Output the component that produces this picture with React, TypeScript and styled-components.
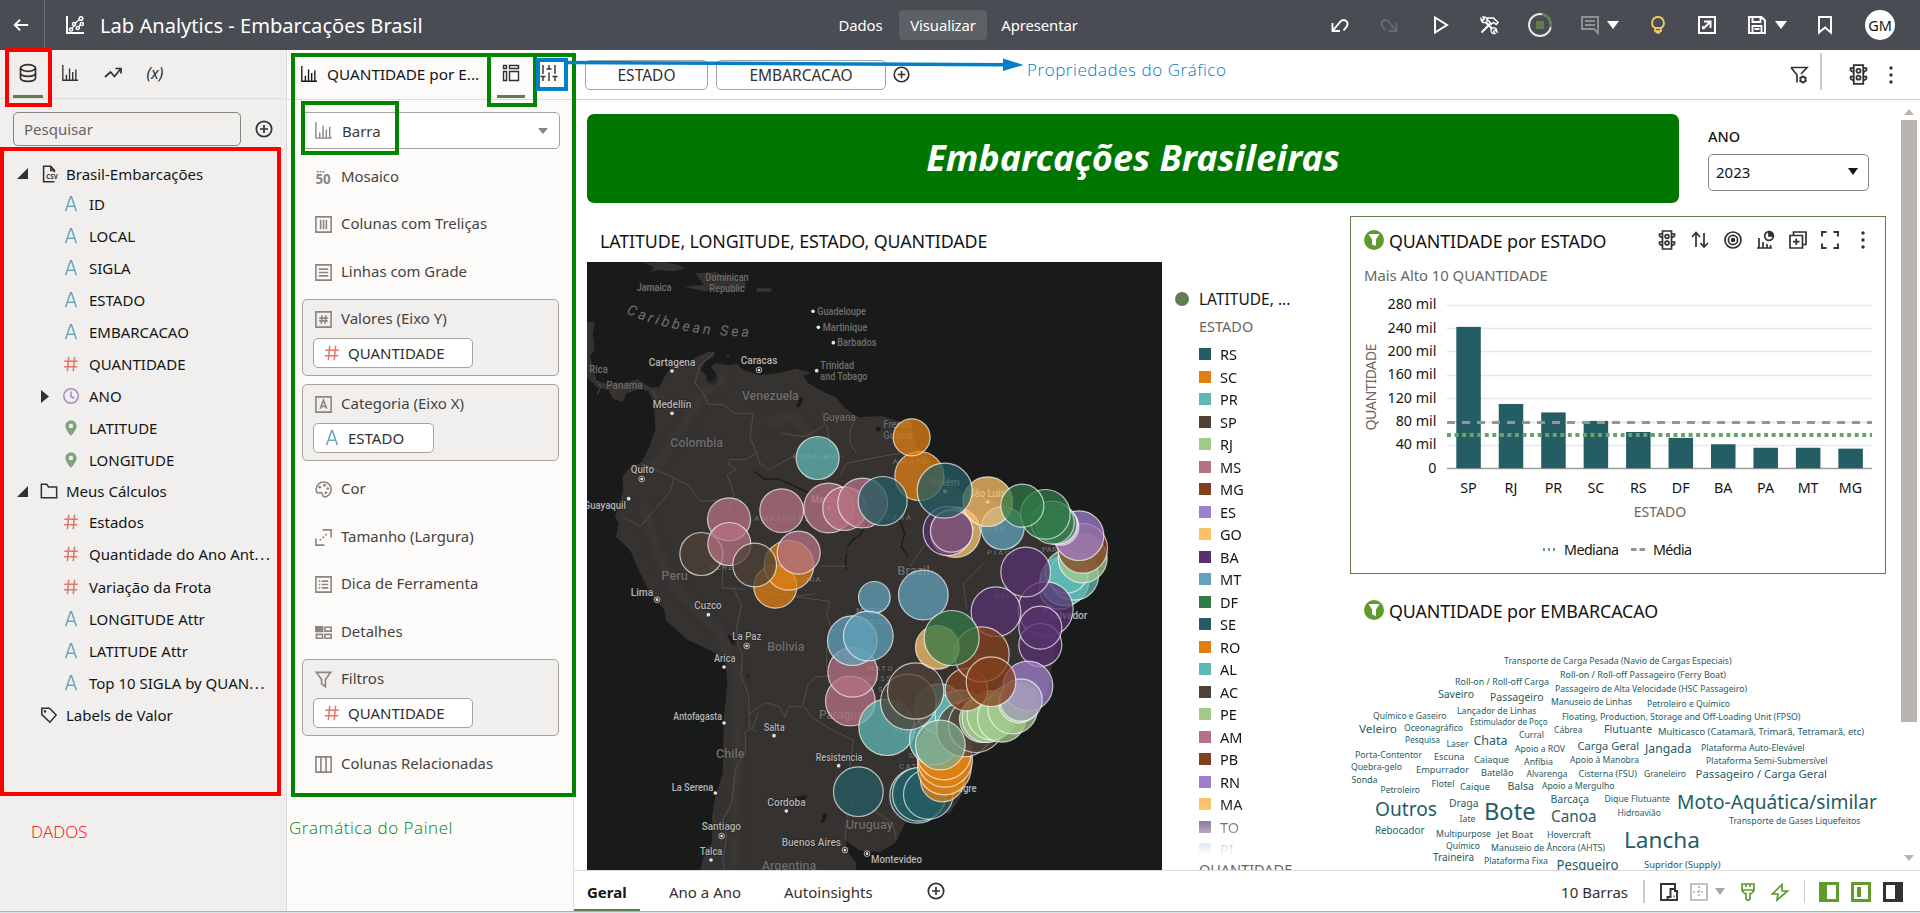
import React from 'react';
import styled, { createGlobalStyle } from 'styled-components';

const Global = createGlobalStyle`
  * { box-sizing: border-box; }
  body { margin: 0; background: #fff; overflow: hidden; }
  body, button, input { font-family: "Noto Sans", "Open Sans", sans-serif; }
  svg { display: block; flex: none; overflow: visible; }
`;

/* ---------- icons ---------- */

const shapes: Record<string, React.ReactNode> = {
  back: <path d="M18 10H3M9 4L3 10l6 6" strokeWidth="2" />,
  scatter: <><path d="M2 1v17h17" strokeWidth="2" /><path d="M6.800 13.600l3-3.600M9.800 8.500L14.500 4.500M15.500 9.500l-2 2.500" strokeWidth="1.300" /><g strokeWidth="1.500"><circle cx="6" cy="14.500" r="1.600" /><circle cx="9" cy="9" r="1.600" /><circle cx="12.700" cy="13" r="1.600" /><circle cx="16" cy="3.500" r="1.800" /><circle cx="16.800" cy="9" r="1.600" /></g></>,
  data: <><ellipse cx="10" cy="5" rx="7.500" ry="3.300" /><path d="M2.500 5v10c0 4.400 15 4.400 15 0V5M2.500 10c0 4.400 15 4.400 15 0" /></>,
  bars: <path d="M2 1v17h17M6 18v-6M9.500 18V5M13 18V9M16.500 18V6" strokeWidth="1.500" />,
  trend: <path d="M2 14l5.500-5 4 4.500L17.500 6M12.500 5.500h5.500v5" />,
  plus: <><circle cx="10" cy="10" r="7.700" /><path d="M10 6v8M6 10h8" /></>,
  grid: <path d="M2.500 2.500h3v3h-3zM8.500 2.500h9v3h-9zM2.500 8.500h3v9h-3zM8.500 8.500h9v9h-9z" strokeWidth="1.400" />,
  sliders: <path d="M4 2v8M4 13.500V18M1.500 13.500h5M10 2v4M10 9.500V18M7.500 6h5M16 2v8M16 13.500V18M13.500 13.500h5M4 10v1M16 10v1" strokeWidth="1.400" />,
  csv: <><path d="M16 8V6l-4-4.500H4v17h12M12 1.500V6h4" /><text x="7" y="15.500" fontSize="7" fontWeight="700" stroke="none" fill="currentColor">CSV</text></>,
  folder: <path d="M1.500 2.500h6l2 3h9v12h-17z" />,
  tag: <><path d="M2 2.500h8.500L18 10l-7 8-9-8.500z" /><circle cx="5.500" cy="6" r=".6" /></>,
  hash: <path d="M7.500 2L6 18M14 2l-1.500 16M2.500 7h15M2 13h15" />,
  attr: <path d="M4 18L9.500 2h1L16 18M6 12.500h8" />,
  clock: <><circle cx="10" cy="10" r="8" /><path d="M10 5v5.500l3.500 2" /></>,
  pin: <path fill="currentColor" stroke="none" fillRule="evenodd" d="M10 1.500a6.300 6.300 0 0 0-6.300 6.300C3.700 12 10 19 10 19s6.300-7 6.300-11.200A6.300 6.300 0 0 0 10 1.500zm0 3.800a2.400 2.400 0 1 1 0 4.900 2.400 2.400 0 0 1 0-4.900z" />,
  fifty: <><text x="1.500" y="17" fontSize="14" fontWeight="700" stroke="none" fill="currentColor">50</text><path d="M3 4h8" strokeDasharray="2 1" /></>,
  trellisCols: <path d="M2 2h16v16H2zM7 5v10M10 5v10M13 5v10" />,
  trellisRows: <path d="M2 2h16v16H2zM5 6.500h10M5 10h10M5 13.500h10" />,
  values: <><path d="M2 2h16v16H2z" /><path d="M8.500 5.500l-.8 9M12.500 5.500l-.8 9M5.500 8.500h9M5.500 11.500h9" /></>,
  category: <path d="M2 2h16v16H2zM6.500 14.500l3.500-9 3.500 9M7.500 12h5" />,
  palette: <><path d="M2.300 9.500a7.900 7.900 0 1 1 9 8.300c-3 .2-1.500-3-3.300-4.300-1.500-1-3 1-4.500 0-1-.8-1.300-2.500-1.200-4z" /><g fill="currentColor" stroke="none"><circle cx="6" cy="7.500" r="1.500" /><circle cx="11" cy="5.500" r="1.500" /><circle cx="14.500" cy="9" r="1.500" /><circle cx="12.500" cy="13.500" r="1.500" /></g></>,
  size: <><path d="M9 2h9v8M11 18H2v-7" /><path d="M6 13l8-7" strokeDasharray="1.800 2.200" /></>,
  tip: <path d="M2 2h16v16H2zM5 6.500h1.500M8 6.500h7M5 10h1.500M8 10h7M5 13.500h1.500M8 13.500h7" />,
  details: <><path d="M2 4h7v5H2z" fill="currentColor" /><path d="M11.500 4.500H18v4h-6.500zM2.500 12H9v4H2.500zM11.500 12H18v4h-6.500z" /></>,
  funnel: <path d="M2.500 2.500h15L12 10v7.500l-4-3V10z" />,
  related: <path d="M2 2h16v16H2zM7.300 2v16M12.700 2v16" />,
  undo: <path d="M2.500 8v8h7.500M3 15.500L10.500 6.500c3.500-3.500 8.500 0 6.500 4.500L13.500 15.500" strokeWidth="1.900" />,
  redo: <path d="M17.500 8v8H10M17 15.500L9.500 6.500C6 3 1 6.500 3 11L6.500 15.500" strokeWidth="1.900" />,
  play: <path d="M4 2.500v15L16 10z" strokeWidth="2" />,
  tools: <><path d="M2.500 17.500L12 8" strokeWidth="2" /><path d="M8.500 3h6l4.500 4.500-1.800 2-2.700-2L12.500 9 8.500 5z" strokeWidth="1.500" /><path d="M6.500 7L13.500 14" strokeWidth="2.200" /><path d="M2 3.500l2 2 1.500-1.500-1.500-2c3-.5 4.500 1.500 4 4-1 2.500-6 2.500-6-2.500zM18 17l-2-2-1.500 1.500 1.500 2c-3 .5-4.500-1.500-4-4 1-2.500 6-2.500 6 2.500z" strokeWidth="1.300" /></>,
  comment: <path d="M2 2h16v16l-4-4H2zM5 6h10M5 10h10" strokeWidth="2" />,
  bulb: <path d="M7 13C2 10 4 2 10 2s8 8 3 11v3l-3 2-3-2zM7 13h6M8 16h4" strokeWidth="1.900" />,
  exportIcon: <path d="M2 2h16v16H2zM6 14l7-7M7 6.500h6.500V13M6 11v3" strokeWidth="2" />,
  save: <path d="M2 2h12.500L18 5.500V18H2zM5.500 2v5h8V2M5.500 18v-7h9v7M7.500 14h5" strokeWidth="1.900" />,
  bookmark: <path d="M4 2h12v15.500l-6-5-6 5z" strokeWidth="2" />,
  filterGear: <><path d="M2 2.500h16L12 9M2 2.500L8 10v7.500" /><circle cx="14" cy="14.500" r="2.600" /><path d="M14 10.500v1.500M14 17v1.500M10.500 12.500l1.300.7M16.200 15.700l1.300.8M10.500 16.500l1.300-.8M16.200 13.200l1.300-.7" /></>,
  traffic: <><path d="M5.500 1h9v18h-9zM5.500 4H2.500v2l3 2M5.500 12h-3v2l3 2M14.500 4h3v2l-3 2M14.500 12h3v2l-3 2" /><circle cx="10" cy="6.500" r="1.900" /><circle cx="10" cy="13" r="1.900" /></>,
  dots: <g fill="currentColor" stroke="none"><circle cx="10" cy="3" r="1.700" /><circle cx="10" cy="10" r="1.700" /><circle cx="10" cy="17" r="1.700" /></g>,
  sort: <path d="M6 17V3M2 7l4-4.500L10 7M14 3v14M10.500 13l3.500 4 4-4" />,
  target: <><circle cx="10" cy="10" r="8" /><circle cx="10" cy="10" r="4.600" /><circle cx="10" cy="10" r="1.400" fill="currentColor" /></>,
  chartPie: <><path d="M2 18h15M4 18V8M8 18v-6M12 18v-4M15.500 18v-3" /><circle cx="14" cy="6" r="4.300" /><path d="M14 1.700V6h4.300A4.300 4.300 0 0 0 14 1.700z" fill="currentColor" /></>,
  copy: <path d="M2 5.500h12.500V18H2zM5.500 5V2H18v12.500h-3M8.300 8.500v6.500M5 11.700h6.500" />,
  expand: <path d="M2 6.500V2h4.500M13.500 2H18v4.500M18 13.500V18h-4.500M6.500 18H2v-4.500" strokeWidth="1.900" />,
  devices: <path d="M8 18H2V2h14v5M16 7h-4.500v8H8.500v3H18V9h-2V7M14.500 14.500h1" strokeWidth="1.900" />,
  borders: <><path d="M2 2h16v16H2z" /><path d="M10 4v12M4 10h12" strokeDasharray="2 2" /></>,
  brush: <path d="M4 2h12v6.500l-2.500 3H12V17l-2 1.500L8 17v-5.500H6.500L4 8.500zM4 8h12M8 2v3M12 2v3" />,
  bolt: <path d="M12 2.500L2.500 12h5.500l-1 6L17.500 9h-5.500z" />,
};

const Svg = styled.svg<{ $s: number; $c?: string }>`
  width: ${p => p.$s}px;
  height: ${p => p.$s}px;
  color: ${p => p.$c || 'inherit'};
  fill: none;
  stroke: currentColor;
  stroke-width: 1.7;
`;
const Icon = ({ n, s = 20, c }: { n: string; s?: number; c?: string }) => (
  <Svg viewBox="0 0 20 20" $s={s} $c={c}>{shapes[n]}</Svg>
);

const Caret = styled.i<{ $c: string; $w?: number }>`
  width: 0; height: 0; flex: none;
  border-left: ${p => p.$w || 5.5}px solid transparent;
  border-right: ${p => p.$w || 5.5}px solid transparent;
  border-top: ${p => (p.$w || 5.5) * 1.35}px solid ${p => p.$c};
`;

/* ---------- page frame ---------- */

const Page = styled.div`
  position: relative;
  width: 1920px; height: 913px;
  display: flex; flex-direction: column;
  overflow: hidden; color: #161513; font-size: 15px; white-space: nowrap;
`;
const Header = styled.header`
  height: 50px; background: #494c53; color: #fff;
  display: flex; align-items: center; flex: none;
`;
const BackBtn = styled.div`
  width: 45px; height: 50px; padding-left: 12px; border-right: 1px solid #6d7076;
  display: flex; align-items: center;
`;
const Title = styled.h1`
  margin: 0 0 0 15px; width: 726px; font-size: 20.100px; font-weight: 400;
`;
const Brand = styled.div`display: flex; align-items: center; padding-left: 20px;`;
const Nav = styled.nav`display: flex; gap: 3px; width: 500px; margin-left: -1px;`;
const NavItem = styled.a<{ $on?: boolean; $w: number }>`
  height: 30px; width: ${p => p.$w}px; line-height: 30px; text-align: center; border-radius: 4px;
  font-size: 14.900px; letter-spacing: -.1px;
  background: ${p => (p.$on ? '#5d6166' : 'transparent')};
`;
const Tools = styled.div`display: flex; align-items: center; margin-left: auto; padding-right: 25px;`;
const Tool = styled.span<{ $ml: number }>`display: flex; margin-left: ${p => p.$ml}px;`;
const Avatar = styled.span`
  width: 30px; height: 30px; border-radius: 50%; background: #fff; color: #161513;
  font-size: 14.500px; line-height: 31px; text-align: center;
`;
const Body = styled.div`display: flex; height: 861px;`;
const BottomEdge = styled.div`height: 2px; background: #d4e6ea; border-top: 1px solid #9fb6bb;`;

/* ---------- data panel ---------- */

const DataPanel = styled.aside`width: 286px; background: #f0efee; flex: none;`;
const PanelTabs = styled.div`
  height: 49px; border-bottom: 1px solid #dedbd8; display: flex; padding-left: 13px; color: #33302d;
`;
const PanelTab = styled.div<{ $w: number; $on?: boolean }>`
  width: ${p => p.$w}px; height: 48px;
  display: flex; align-items: center; justify-content: center;
  border-bottom: 3px solid ${p => (p.$on ? '#5f7d4f' : 'transparent')};
  font: italic 16px "Noto Sans";
`;
const SearchRow = styled.div`display: flex; align-items: center; margin: 13px 0 0 13px; gap: 13px; color: #33302d;`;
const Search = styled.div`
  width: 228px; height: 34px; border: 1px solid #8b8580; border-radius: 5px; padding: 0 10px;
  line-height: 33px; color: #69635d; font-size: 15px;
`;
const Tree = styled.div`padding-top: 13px;`;
const TreeRow = styled.div<{ $h: number; $lvl: number }>`
  height: ${p => p.$h}px; display: flex; align-items: center;
  padding-left: ${p => (p.$lvl ? 41 : 17)}px;
`;
const Twist = styled.span<{ $w: number }>`width: ${p => p.$w}px; display: flex;`;
const TreeIcon = styled.span<{ $lvl: number }>`width: ${p => (p.$lvl ? 27 : 26)}px; display: flex;`;
const Dots = styled.span`letter-spacing: 1.700px;`;

const fieldColor: Record<string, string> = { attr: '#6ba4bd', hash: '#e0786a', clock: '#a48fc0', pin: '#82a478' };

type Row = { kind: string; name: string; parent?: boolean; cut?: boolean };
const fields: Row[] = [
  { kind: 'attr', name: 'ID' }, { kind: 'attr', name: 'LOCAL' }, { kind: 'attr', name: 'SIGLA' },
  { kind: 'attr', name: 'ESTADO' }, { kind: 'attr', name: 'EMBARCACAO' }, { kind: 'hash', name: 'QUANTIDADE' },
  { kind: 'clock', name: 'ANO', parent: true }, { kind: 'pin', name: 'LATITUDE' }, { kind: 'pin', name: 'LONGITUDE' },
];
const calcs: Row[] = [
  { kind: 'hash', name: 'Estados' }, { kind: 'hash', name: 'Quantidade do Ano Ant', cut: true }, { kind: 'hash', name: 'Variação da Frota' },
  { kind: 'attr', name: 'LONGITUDE Attr' }, { kind: 'attr', name: 'LATITUDE Attr' }, { kind: 'attr', name: 'Top 10 SIGLA by QUAN', cut: true },
];

const Open = () => <svg width="11" height="11"><path d="M11 0v11H0z" fill="#33302d" /></svg>;
const Closed = () => <svg width="8" height="13"><path d="M0 0l8 6.500L0 13z" fill="#33302d" /></svg>;

const Folder = ({ icon, name, open = true, h }: { icon: string; name: string; open?: boolean; h: number }) => (
  <TreeRow $h={h} $lvl={0}>
    <Twist $w={23}>{open && <Open />}</Twist>
    <TreeIcon $lvl={0}><Icon n={icon} s={18} c="#33302d" /></TreeIcon>
    <span>{name}</span>
  </TreeRow>
);
const Field = ({ row }: { row: Row }) => (
  <TreeRow $h={32.050} $lvl={1}>
    <Twist $w={21}>{row.parent && <Closed />}</Twist>
    <TreeIcon $lvl={1}><Icon n={row.kind} s={18} c={fieldColor[row.kind]} /></TreeIcon>
    <span>{row.name}{row.cut && <Dots>...</Dots>}</span>
  </TreeRow>
);

/* ---------- grammar panel ---------- */

const GrammarPanel = styled.aside`
  width: 288px; background: #fcfbfa; flex: none;
  border-left: 1px solid #dedbd8; border-right: 1px solid #dedbd8;
`;
const GrammarHead = styled.div`
  height: 50px; border-bottom: 1px solid #dedbd8; display: flex; padding-left: 13px; color: #33302d;
`;
const GrammarTitle = styled.div`
  width: 169px; height: 47px; display: flex; align-items: center; gap: 9px; color: #161513; font-size: 15.300px;
`;
const TypeSelect = styled.div`
  margin: 12px 0 3px 14px; width: 259px; height: 37px; border: 1px solid #a8a29c; border-radius: 5px; background: #fff;
  display: flex; align-items: center; padding: 0 11px 0 12px; color: #3d3935;
  & > span { flex: 1; padding-left: 9px; }
`;
const Edge = styled.div`
  height: 47.500px; display: flex; align-items: center; padding-left: 27px; gap: 8px;
  color: #47433f; font-size: 14.900px;
  & > svg { color: #8b8580; position: relative; top: 1.500px; }
`;
const EdgeBox = styled.div<{ $mt: number; $mb: number }>`
  height: 77px; width: 257px; margin: ${p => p.$mt}px 0 ${p => p.$mb}px 15px;
  background: #f0efee; border: 1px solid #a8a29c; border-radius: 5px; padding: 2px 10px 0;
`;
const EdgeLabel = styled.div`
  height: 31px; display: flex; align-items: center; gap: 8px; padding-left: 1px; color: #47433f;
  & > svg { color: #8b8580; position: relative; top: 2px; }
`;
const Pill = styled.div<{ $w: number }>`
  margin-top: 5px; width: ${p => p.$w}px; height: 30px; background: #fff; border: 1px solid #a8a29c; border-radius: 5px;
  display: flex; align-items: center; gap: 7px; padding: 0 0 1px 9px; color: #33302d;
`;
const Box = ({ icon, label, field, kind, w, mt, mb = 0 }: { icon: string; label: string; field: string; kind: string; w: number; mt: number; mb?: number }) => (
  <EdgeBox $mt={mt} $mb={mb}>
    <EdgeLabel><Icon n={icon} s={19} />{label}</EdgeLabel>
    <Pill $w={w}><Icon n={kind} s={18} c={fieldColor[kind]} />{field}</Pill>
  </EdgeBox>
);

/* ---------- canvas ---------- */

const Main = styled.main`flex: 1; display: flex; flex-direction: column; min-width: 0;`;
const FilterBar = styled.div`
  height: 50px; border-bottom: 1px solid #cfcbc8; display: flex; align-items: center; padding-left: 11px; color: #33302d; flex: none;
`;
const Chip = styled.div<{ $w: number; $mr: number }>`
  width: ${p => p.$w}px; height: 30px; line-height: 29px; text-align: center; margin-right: ${p => p.$mr}px;
  border: 1px solid #a8a29c; border-radius: 5px; font-size: 15.500px;
`;
const BarRight = styled.div`display: flex; align-items: center; margin-left: auto; padding-right: 19px;`;
const Rule = styled.i<{ $h: number; $m: string }>`width: 1.500px; height: ${p => p.$h}px; margin: ${p => p.$m}; background: #cfcbc8;`;
const CanvasWrap = styled.div`height: 770px; display: flex; overflow: hidden;`;
const Canvas = styled.div`
  width: 1327px; padding: 13.500px 0 0 13px;
  display: grid; grid-template-columns: 763px 1fr; grid-template-rows: 90px 1fr; row-gap: 12.500px;
`;
const TopRow = styled.div`grid-column: 1 / 3; display: flex;`;
const Banner = styled.div`
  width: 1092px; height: 89.500px; border-radius: 7px; background: #007500;
  color: #fff; font: italic bold 36px/88px "Noto Sans"; text-align: center;
`;
const YearFilter = styled.div`
  padding: 11px 0 0 29px; font-weight: 500;
  & > div:first-child { height: 29px; font-size: 14.500px; line-height: 23px; }
`;
const YearSelect = styled.div`
  width: 161px; height: 37.500px; border: 1px solid #8b8580; border-radius: 5px; font-weight: 400;
  display: flex; align-items: center; justify-content: space-between; padding: 0 10px 1px 7px;
`;
const VizTitle = styled.h2<{ $pl?: number }>`
  margin: 0; font-size: 17.850px; font-weight: 400; letter-spacing: -.12px; padding-left: ${p => p.$pl || 0}px; color: #161513;
`;
const MapViz = styled.section`
  & > ${VizTitle} { height: 46px; line-height: 50px; }
`;
const MapRow = styled.div`display: flex; height: 608px;`;
const MapFrame = styled.div`
  width: 575px; height: 608px; background: #191b1a; overflow: hidden; flex: none;
  & text { font-family: Roboto, sans-serif; }
`;
const Legend = styled.div`padding-left: 37px; height: 608px; overflow: hidden; color: #33302d; font-size: 15.500px;`;
const LegendHead = styled.div`
  display: flex; align-items: center; gap: 10px; height: 22px; margin: 26px 0 0 -24px; color: #161513;
  &::before { content: ""; width: 14px; height: 14px; border-radius: 50%; background: #5f7d4f; }
`;
const LegendTitle = styled.div<{ $lh: number }>`height: 32px; line-height: ${p => p.$lh}px; color: #6b6661; font-size: 14.500px;`;
const LegendItems = styled.div`
  height: 513px; padding-top: 1px; overflow: hidden;
  mask-image: linear-gradient(#000 calc(100% - 52px), transparent 100%);
`;
const LegendItem = styled.div<{ $c: string }>`
  display: flex; align-items: center; gap: 9px; height: 22.500px; font-size: 14.500px; color: #161513;
  &::before { content: ""; width: 12px; height: 12px; background: ${p => p.$c}; }
`;

const palette = ['#255d64', '#df8013', '#60b8b5', '#4e4137', '#a2ca8b', '#b57283', '#84401e', '#9f7fcc', '#fbc168', '#57316d', '#62a2bb', '#327a48'];
const [SEc, OR, TE, BR, LG, PK, MG, PU, GO, BA, BL, GR] = palette;
const states = ['RS', 'SC', 'PR', 'SP', 'RJ', 'MS', 'MG', 'ES', 'GO', 'BA', 'MT', 'DF', 'SE', 'RO', 'AL', 'AC', 'PE', 'AM', 'PB', 'RN', 'MA', 'TO', 'PI'];

/* Map geometry is in thirds of a pixel. */
const bubbles: [number, number, number, string][] = [
  [1018, 678, 75, OR], [995, 562, 57, OR], [713, 624, 66, TE],
  [605, 782, 67, PK], [746, 774, 76, PK], [794, 776, 67, PK], [848, 759, 76, PK], [908, 753, 75, SEc],
  [364, 912, 66, BR], [447, 808, 66, PK], [448, 882, 66, PK], [586, 1010, 66, OR], [627, 946, 76, OR], [524, 945, 67, BR], [656, 908, 66, PK],
  [1126, 847, 77, GO], [1103, 843, 75, BA], [1115, 843, 65, '#7f5579'], [1268, 834, 66, BL], [1223, 755, 76, GO], [1094, 722, 84, SEc],
  [1440, 1015, 64, SEc], [1453, 993, 75, TE], [1482, 977, 75, TE], [1460, 965, 66, TE],
  [1508, 925, 75, LG], [1508, 895, 76, MG], [1497, 857, 76, PU], [1441, 830, 57, PU], [1438, 826, 57, PU],
  [1430, 822, 62, GR], [1418, 818, 66, GR], [1396, 793, 76, GR], [1327, 767, 66, GR],
  [1397, 1078, 84, BA], [1381, 1185, 66, BA], [1381, 1133, 66, BA], [1248, 1085, 76, BA], [1337, 966, 76, BA],
  [1030, 1035, 76, BL], [883, 1042, 49, BL], [811, 1353, 76, PK], [818, 1267, 76, PK], [817, 1172, 76, BL], [865, 1158, 76, BL],
  [835, 1625, 76, SEc], [1012, 1637, 84, SEc], [1018, 1633, 82, SEc], [1045, 1633, 76, SEc],
  [1087, 1590, 67, OR], [1093, 1554, 82, OR], [1095, 1529, 84, OR], [1092, 1507, 84, OR],
  [921, 1432, 86, TE], [1063, 1470, 76, TE], [1078, 1375, 75, TE], [1142, 1396, 78, TE],
  [1153, 1438, 84, BR], [1188, 1425, 84, BR], [1081, 1485, 76, '#80aa8c'],
  [985, 1356, 85, BR], [1007, 1323, 86, BR],
  [1208, 1408, 71, LG], [1220, 1404, 75, LG], [1235, 1396, 75, LG], [1265, 1404, 74, LG], [1298, 1377, 76, LG], [1317, 1358, 62, LG],
  [1344, 1308, 76, PU], [1323, 1350, 65, '#a09bb6'],
  [1159, 1319, 65, MG], [1205, 1213, 84, MG], [1233, 1295, 76, MG],
  [1072, 1192, 67, GO], [1115, 1164, 84, GR],
];

type MapLabel = [string, number, number, number, number];
/* text, x, baseline, width, size */
const countries: MapLabel[] = [
  ['Dominican', 376, 94, 130, 31], ['Republic', 388, 126, 106, 31], ['Jamaica', 170, 123, 104, 31], ['Guadeloupe', 712, 194, 146, 31],
  ['Martinique', 728, 243, 134, 31], ['Barbados', 772, 289, 117, 31], ['Trinidad', 721, 357, 102, 31], ['and Tobago', 721, 389, 141, 31],
  ['Rica', 28, 370, 56, 31], ['Panama', 79, 417, 109, 31], ['Venezuela', 486, 451, 170, 38], ['Guyana', 728, 512, 99, 32],
  ['French', 910, 535, 86, 30], ['Guiana', 910, 566, 88, 30], ['Colombia', 271, 590, 158, 38], ['Peru', 244, 991, 80, 38], ['Bolivia', 562, 1204, 111, 38],
  ['Brazil', 952, 974, 97, 38], ['Paraguay', 717, 1406, 150, 38], ['Chile', 408, 1525, 86, 38], ['Uruguay', 797, 1736, 142, 38], ['Argentina', 545, 1861, 164, 38],
];
const regions: MapLabel[] = [
  ['RORAIMA', 638, 626, 134, 24], ['AMAPÁ', 938, 643, 104, 24], ['AMAZONAS', 522, 814, 165, 24], ['PARÁ', 917, 811, 76, 24],
  ['MARANHÃO', 1108, 843, 168, 24], ['PIAUÍ', 1221, 914, 82, 24], ['PARAÍBA', 1386, 905, 100, 24], ['BAHIA', 1243, 1047, 84, 24],
  ['ACRE', 388, 960, 70, 24], ['RONDÔNIA', 590, 995, 132, 24], ['MATO', 828, 1090, 78, 24], ['GROSSO', 815, 1122, 110, 24], ['GOIÁS', 1020, 1181, 86, 24],
  ['MATO', 860, 1262, 78, 24], ['GROSSO', 842, 1294, 110, 24], ['DO SUL', 846, 1326, 96, 24], ['MINAS', 1180, 1230, 80, 24], ['GERAIS', 1170, 1264, 100, 24],
  ['PARANÁ', 938, 1452, 110, 24], ['SANTA', 984, 1524, 80, 24], ['CATARINA', 957, 1556, 140, 24],
];
/* text, x, baseline, width, size, marker x, marker y, capital */
const cities: [...MapLabel, number, number, boolean?][] = [
  ['Cartagena', 206, 347, 140, 31, 276, 363], ['Caracas', 482, 343, 110, 31, 537, 360, true], ['Medellín', 218, 475, 116, 31, 276, 490],
  ['Quito', 152, 669, 70, 31, 185, 687, true], ['Guayaquil', 11, 776, 127, 31, 146, 746], ['Belém', 1051, 709, 89, 31, 1095, 724],
  ['Manaus', 694, 759, 94, 31, 747, 775], ['São Luís', 1166, 741, 110, 31, 1223, 756], ['Salvador', 1404, 1106, 118, 31, 1396, 1078],
  ['Lima', 152, 1038, 68, 31, 231, 1049, true], ['Cuzco', 343, 1078, 82, 31, 385, 1094], ['La Paz', 457, 1170, 87, 31, 500, 1188, true],
  ['Arica', 402, 1236, 64, 30, 432, 1251], ['Antofagasta', 280, 1410, 146, 30, 432, 1419], ['Salta', 551, 1442, 63, 30, 582, 1457],
  ['Resistencia', 707, 1532, 140, 30, 776, 1547], ['La Serena', 275, 1623, 125, 30, 406, 1629], ['Cordoba', 562, 1668, 115, 30, 619, 1683],
  ['Santiago', 365, 1739, 118, 30, 425, 1758, true], ['Talca', 360, 1815, 67, 30, 393, 1830], ['Buenos Aires', 605, 1788, 178, 30, 795, 1800, true],
  ['Montevideo', 873, 1840, 153, 30, 861, 1811, true], ['Porto Alegre', 1030, 1626, 160, 30, 1085, 1600],
];

const MapText = ({ l, spaced }: { l: MapLabel; spaced?: boolean }) => (
  <text x={l[1]} y={l[2]} fontSize={l[4]} textLength={l[3]} lengthAdjust={spaced ? 'spacing' : 'spacingAndGlyphs'}>{l[0]}</text>
);

const BrazilMap = () => (
  <svg width="575" height="608" viewBox="21 36 1725 1824">
    <defs>
      <path id="sea" d="M138 190Q300 262 540 260" />
      <filter id="soft" x="-5%" y="-5%" width="110%" height="110%"><feGaussianBlur stdDeviation="9" /></filter>
    </defs>
    <g fill="#353230">
      <path d="M21 215L45 216 38 250 44 300 30 318 50 392 85 402 130 400 172 388 212 412 238 412 255 378 275 348 312 342 352 320 385 305 405 306 400 320 375 335 362 360 378 375 382 395 398 408 413 396 408 370 392 350 405 340 450 346 470 340 490 360 540 376 600 368 650 356 694 368 670 378 684 398 705 412 740 430 766 440 795 474 835 502 905 498 950 512 990 525 1010 590 1040 610 1060 660 1090 668 1150 730 1223 745 1300 782 1370 782 1480 820 1540 890 1545 950 1470 1060 1432 1095 1425 1200 1400 1330 1350 1400 1240 1420 1170 1500 1155 1620 1110 1690 1030 1690 975 1720 945 1780 900 1806 840 1802 798 1772 800 1800 830 1842 826 1870H358L375 1800 397 1780 396 1700 406 1640 428 1570 432 1400 442 1300 436 1240 400 1206 320 1168 258 1112 252 1076 215 1040 180 968 150 900 108 860 116 820 105 800 130 720 128 680 150 652 182 640 206 596 226 540 222 460 205 424 182 416 140 430 128 456 98 446 86 420 52 412 21 382z" />
      <path d="M195 40l60-4 40 8 22 12-40 8-40-4-26 6 12-14zM345 70l60-4 30 12 60 14 2 20-40 14-40-10-44 8-62-14 60-6zM530 114l46 1-4 10-42 1zM180 112l40-4 34 8-30 10zM438 314l12 2-6 8z" />
    </g>
    <g fill="none" stroke="#3e3b39" strokeWidth="24" filter="url(#soft)" opacity=".7">
      <path d="M440 380L370 430 330 500 250 620 210 660M190 760L230 900 290 1020 420 1150 480 1280 470 1600 460 1860M560 520l80-20 60 60" />
    </g>
    <g fill="#191b1a">
      <path d="M648 470l14-30 8 6-10 26zM442 1155l14 4 12 26-14-4zM496 1270l12 8-4 8zM722 1720l8-30 12 2-8 24zM640 1642l40-6-6 18-30 2zM888 530l14 2-4 14-10-4z" />
    </g>
    <g fill="none" stroke="#191b1a" strokeWidth="4">
      <path d="M524 664l30 24 40-2 40 18 50 24M802 890l16-20 22-14 20-36 40-14M960 810l14 40-10 40 20 30M800 910l-4 30 4 20" />
    </g>
    <g fill="none" stroke="#575452" strokeWidth="2.500" strokeLinejoin="round">
      <path d="M400 310L360 345 345 398 370 430 384 462 430 464 462 490 520 490 510 560 530 610 540 640 570 660 600 640 640 620M604 550l70 10 20-10 40-25-6-40M740 525l10 60 40 40M830 500l-20 40 0 40 20 30M448 645l0-16 50 0 30-20M448 645l20 14-26 15 20 60-20 60M182 640l100 44-10 40-90 104-54-26M282 684l40 20 40 50 60-4M380 850l60-30M430 890l-4 124 70 4M460 1014l24 50-14 70 4 50 14 30-6 60 24 60 2 100 22 10M508 1390l30-20 20-12 40 12 16 32 14-34 40 4M668 1364l16-60 20-22 60-6M668 1364l30 40 60 36 62 30-10 80M534 1390l-14 40-24 16 0 60-30 50-10 100-30 60 14 40-12 80 10 34M510 1014l90 20 150 20-10 40 20 60-20 40 0 60M640 1040l70-10M720 948l80 0M1060 1150l-40 60M1160 1080l-10-80 60-60M795 1770l4-60 20-60 60 30 60 40 10 50M780 680l20-40 100-20 60-10M990 950l40-60 60-30M52 392l10 20-10 20M215 420l14 20-8 20" />
    </g>
    <g fill="#6f6d6c" stroke="#232221" strokeWidth="3" paintOrder="stroke" strokeOpacity=".6" fontWeight="500">
      {countries.map(l => <MapText key={l[0]} l={l} />)}
      {regions.map((l, i) => <MapText key={i} l={l} spaced />)}
      <text fontSize="43" fontStyle="italic" fontWeight="400"><textPath href="#sea" textLength="378">Caribbean Sea</textPath></text>
    </g>
    <g fill="#b5b4b4" stroke="#1b1a1a" strokeWidth="3" paintOrder="stroke" fontWeight="500">
      {cities.map(([t, x, y, w, s]) => <MapText key={t} l={[t, x, y, w, s]} />)}
    </g>
    {cities.map(([t, , , , , x, y, cap]) => (
      <g key={t}>
        <circle cx={x} cy={y} r={cap ? 4 : 5.500} fill="#e4e4e4" />
        {cap && <circle cx={x} cy={y} r="8.500" fill="none" stroke="#c9c9c9" strokeWidth="2.500" />}
      </g>
    ))}
    {[[699, 184], [715, 232], [760, 278], [710, 362]].map(([x, y]) => <circle key={x} cx={x} cy={y} r="5.500" fill="#e4e4e4" />)}
    {bubbles.map(([x, y, r, c], i) => (
      <circle key={i} cx={x} cy={y} r={r - 1.500} fill={c} fillOpacity=".75" stroke="#fff" strokeOpacity=".68" strokeWidth="3.600" />
    ))}
  </svg>
);

/* ---------- bar chart ---------- */

const RightCol = styled.div`display: flex; flex-direction: column;`;
const ChartCard = styled.section`
  width: 536px; height: 358px; border: 1px solid #5f7d4f; padding: 11px 0 0 13px; flex: none;
`;
const CardHead = styled.div`
  display: flex; align-items: center; height: 24px; gap: 5px; color: #33302d;
  & > ${VizTitle} { flex: 1; line-height: 24px; padding-top: 1px; }
`;
const CardTools = styled.div`display: flex; gap: 12.600px; padding-right: 12px;`;
const Subtitle = styled.div`height: 35px; line-height: 47px; font-size: 14.900px; letter-spacing: -.05px; color: #6b6661;`;
const CloudCard = styled.section`
  padding: 24px 0 0 14px;
  & > svg { margin: 28px 0 0 -24px; overflow: visible; }
`;

const Badge = () => (
  <svg width="20" height="20" viewBox="0 0 20 20"><circle cx="10" cy="10" r="10" fill="#609a2c" /><path d="M4.500 4h11L12 9.500V16l-4-1.500v-5z" fill="#fff" /></svg>
);

const bars: [string, number][] = [['SP', 242], ['RJ', 110], ['PR', 95.500], ['SC', 81], ['RS', 62], ['DF', 52], ['BA', 41], ['PA', 35], ['MT', 35], ['MG', 33.500]];

const BarChart = () => (
  <svg width="534" height="280" viewBox="1364 287 534 280" fontSize="14.300">
    <text transform="rotate(-90 1371 387)" x="1371" y="392" textAnchor="middle" fill="#6b6661" textLength="87">QUANTIDADE</text>
    {[280, 240, 200, 160, 120, 80, 40, 0].map((v, i) => {
      const y = 304.700 + i * 23.360;
      return (
        <g key={v}>
          <path d={`M1447 ${Math.round(y) + .5}H1872`} stroke={v ? '#e4e8ec' : '#9e9b99'} strokeWidth="1.300" />
          <text x="1436.500" y={y + 4.500} textAnchor="end" fill="#161513">{v ? `${v} mil` : '0'}</text>
        </g>
      );
    })}
    {bars.map(([k, v], i) => (
      <g key={k}>
        <rect x={1456.300 + i * 42.450} y={468.200 - v * .584} width="24.500" height={v * .584} fill="#255d64" />
        <text x={1468.500 + i * 42.450} y="493" textAnchor="middle" fill="#161513">{k}</text>
      </g>
    ))}
    <path d="M1447 422.500H1872" stroke="#979393" strokeWidth="3" strokeDasharray="8 7" />
    <path d="M1447 435H1872" stroke="#68a06e" strokeWidth="4" strokeDasharray="4 3.550" />
    <text x="1660" y="517" textAnchor="middle" fill="#6b6661" fontSize="14">ESTADO</text>
    <path d="M1543 549.500h14" stroke="#68a06e" strokeWidth="3" strokeDasharray="2 3" />
    <text x="1564" y="555" fill="#161513" textLength="55">Mediana</text>
    <path d="M1631 549.500h14" stroke="#979393" strokeWidth="3" strokeDasharray="5.500 3" />
    <text x="1653" y="555" fill="#161513" textLength="39">Média</text>
  </svg>
);

/* word, x, centre y, width, font size */
const words: [string, number, number, number, number?][] = [
  ['Transporte de Carga Pesada (Navio de Cargas Especiais)', 164, 11, 227.500], ['Roll-on / Roll-off Passageiro (Ferry Boat)', 220, 25, 166],
  ['Roll-on / Roll-off Carga', 115, 32, 94], ['Passageiro de Alta Velocidade (HSC Passageiro)', 215, 39, 192],
  ['Saveiro', 98, 45, 36, 10.500], ['Passageiro', 150, 48, 53.500, 11], ['Manuseio de Linhas', 211, 52, 81], ['Petroleiro e Químico', 307, 54, 83],
  ['Lançador de Linhas', 117, 61, 79.500], ['Químico e Gaseiro', 33, 66, 73.500], ['Estimulador de Poço', 130, 72, 77.500],
  ['Floating, Production, Storage and Off-Loading Unit (FPSO)', 222, 67, 238.500], ['Veleiro', 19, 80, 38, 11], ['Oceonagráfico', 64, 78, 59],
  ['Pesquisa', 65, 90, 35], ['Laser', 106.500, 94, 22], ['Chata', 133.500, 90.500, 34, 13], ['Curral', 179, 85, 25], ['Cábrea', 214, 80, 28.500],
  ['Flutuante', 264, 80, 48, 11], ['Multicasco (Catamarã, Trimarã, Tetramarã, etc)', 318, 82, 206], ['Apoio a ROV', 175, 99, 50],
  ['Carga Geral', 237.500, 96, 61.500, 11.500], ['Jangada', 305, 99, 46.500, 12], ['Plataforma Auto-Elevável', 361, 98, 103.500],
  ['Porta-Contentor', 15, 105, 67], ['Escuna', 94, 107, 30.500], ['Caiaque', 134, 110, 35], ['Anfíbia', 184, 112, 29], ['Apoio à Manobra', 230, 110, 69],
  ['Plataforma Semi-Submersível', 366, 111, 121.500], ['Quebra-gelo', 11, 117, 51], ['Empurrador', 76, 120, 53, 9.500], ['Batelão', 141, 123, 32.500],
  ['Alvarenga', 186.500, 124, 41], ['Cisterna (FSU)', 238.500, 124, 58.500], ['Graneleiro', 304, 124, 42], ['Passageiro / Carga Geral', 355.500, 125, 131.500, 11],
  ['Sonda', 11.500, 130, 26], ['Flotel', 91.500, 134, 23], ['Caique', 120, 137, 30], ['Petroleiro', 40.500, 140, 39.500], ['Balsa', 167.500, 137, 26.500, 10.500],
  ['Apoio a Mergulho', 202, 136, 72.500], ['Outros', 35, 159, 62, 20], ['Draga', 109, 154, 29.500, 11], ['Iate', 119.500, 169, 16], ['Bote', 144, 162.500, 51.500, 23.500],
  ['Barcaça', 210.500, 150, 38.500, 11], ['Canoa', 211, 167, 45.500, 16.500], ['Dique Flutuante', 264.500, 149, 65.500], ['Hidroavião', 277.500, 163, 43.500],
  ['Moto-Aquática/similar', 337, 152.500, 200, 19.500], ['Transporte de Gases Liquefeitos', 389, 171, 131.500], ['Rebocador', 35, 181, 49.500, 10.500],
  ['Multipurpose', 96, 184, 55], ['Jet Boat', 157, 185, 36], ['Hovercraft', 207, 185, 44], ['Lancha', 284, 190, 76, 22.500], ['Químico', 106, 196, 34],
  ['Manuseio de Âncora (AHTS)', 151, 198, 114], ['Traineira', 93, 208, 41, 10], ['Plataforma Fixa', 144, 211, 64], ['Pesqueiro', 216.500, 215, 62, 14], ['Supridor (Supply)', 304, 215, 76.500],
];
const WordCloud = () => (
  <svg width="560" height="220" fill="#255d64">
    {words.map(([t, x, y, w, s = 9.200]) => (
      <text key={t} x={x} y={y + s * .36 - .5} fontSize={s} textLength={w} lengthAdjust="spacingAndGlyphs">{t}</text>
    ))}
  </svg>
);

/* ---------- scrollbar and footer ---------- */

const Scroll = styled.div`width: 16px; display: flex; flex-direction: column; align-items: center; padding: 9px 0;`;
const Thumb = styled.i`width: 16px; height: 602px; margin: 5px 0 auto; background: #bab4b0;`;
const Up = styled(Caret)`transform: rotate(180deg);`;
const Footer = styled.footer`
  height: 41px; border-top: 1px solid #dedbd8; display: flex; color: #33302d; background: #fff;
`;
const PageTab = styled.div<{ $w: number; $pl: number; $on?: boolean }>`
  width: ${p => p.$w}px; padding-left: ${p => p.$pl}px; line-height: 42px; height: 40px;
  font-weight: ${p => (p.$on ? 700 : 400)}; color: ${p => (p.$on ? '#161513' : '#33302d')};
  border-bottom: 2px solid ${p => (p.$on ? '#5f7d4f' : 'transparent')};
`;
const FooterPlus = styled.div`padding-top: 10px; margin-left: 28px;`;
const FooterRight = styled.div`display: flex; align-items: center; margin-left: auto; padding: 1px 17px 0 0;`;
const LayoutBtn = styled.i<{ $c: string; $b: string; $ml: number }>`
  width: 20px; height: 20px; margin-left: ${p => p.$ml}px; border-style: solid; border-color: ${p => p.$c}; border-width: ${p => p.$b};
  display: flex; padding: 2px 3px;
  & > i { width: 4px; background: ${p => p.$c}; }
`;

/* ---------- annotations over the page ---------- */

const Mark = styled.div<{ $x: number; $y: number; $w: number; $h: number; $c: string }>`
  position: absolute; left: ${p => p.$x}px; top: ${p => p.$y}px; width: ${p => p.$w}px; height: ${p => p.$h}px;
  border: 4px solid ${p => p.$c}; pointer-events: none;
`;
const Note = styled.div<{ $x: number; $y: number; $c: string; $ls?: number }>`
  position: absolute; left: ${p => p.$x}px; top: ${p => p.$y}px; color: ${p => p.$c};
  font: 350 17px/24px "Open Sans", sans-serif; letter-spacing: ${p => p.$ls || 0}px;
`;
const Arrow = styled.svg`position: absolute; left: 560px; top: 50px;`;

export default function App() {
  return (
    <Page>
      <Global />
      <Header>
        <BackBtn><Icon n="back" s={18} /></BackBtn>
        <Brand><Icon n="scatter" s={20} /><Title>Lab Analytics - Embarcações Brasil</Title></Brand>
        <Nav>
          <NavItem $w={71}>Dados</NavItem><NavItem $w={88} $on>Visualizar</NavItem><NavItem $w={99}>Apresentar</NavItem>
        </Nav>
        <Tools>
          <Tool $ml={0}><Icon n="undo" /></Tool>
          <Tool $ml={29}><Icon n="redo" c="#666a70" /></Tool>
          <Tool $ml={32}><Icon n="play" /></Tool>
          <Tool $ml={28}><Icon n="tools" /></Tool>
          <Tool $ml={28}>
            <svg width="26" height="26" viewBox="0 0 26 26" fill="none" strokeWidth="1.900">
              <circle cx="13" cy="13" r="11" stroke="#e8e8e8" /><path d="M15 2.200a11 11 0 0 1 8.800 13" stroke="#5f7d4f" strokeWidth="2.400" />
              <path d="M9 9h8v8H9z" fill="#5f7d4f" />
            </svg>
          </Tool>
          <Tool $ml={27}><Icon n="comment" c="#8d9094" /></Tool>
          <Tool $ml={7}><Caret $c="#fff" $w={6} /></Tool>
          <Tool $ml={29}><Icon n="bulb" c="#e9c46a" /></Tool>
          <Tool $ml={29}><Icon n="exportIcon" /></Tool>
          <Tool $ml={30}><Icon n="save" /></Tool>
          <Tool $ml={8}><Caret $c="#fff" $w={6} /></Tool>
          <Tool $ml={28}><Icon n="bookmark" /></Tool>
          <Tool $ml={30}><Avatar>GM</Avatar></Tool>
        </Tools>
      </Header>

      <Body>
        <DataPanel>
          <PanelTabs>
            <PanelTab $w={30} $on><Icon n="data" /></PanelTab>
            <PanelTab $w={54}><Icon n="bars" s={18} /></PanelTab>
            <PanelTab $w={32}><Icon n="trend" /></PanelTab>
            <PanelTab $w={52}>(x)</PanelTab>
          </PanelTabs>
          <SearchRow><Search>Pesquisar</Search><Icon n="plus" /></SearchRow>
          <Tree>
            <Folder icon="csv" name="Brasil-Embarcações" h={29} />
            {fields.map(r => <Field key={r.name} row={r} />)}
            <Folder icon="folder" name="Meus Cálculos" h={30} />
            {calcs.map(r => <Field key={r.name} row={r} />)}
            <Folder icon="tag" name="Labels de Valor" open={false} h={32.500} />
          </Tree>
        </DataPanel>

        <GrammarPanel>
          <GrammarHead>
            <GrammarTitle><Icon n="bars" s={18} />QUANTIDADE por E...</GrammarTitle>
            <PanelTab $w={29} />
            <PanelTab $w={30} $on><Icon n="grid" /></PanelTab>
            <PanelTab $w={50}><Icon n="sliders" /></PanelTab>
          </GrammarHead>
          <TypeSelect><Icon n="bars" s={19} c="#8b8580" /><span>Barra</span><Caret $c="#8b8580" $w={5} /></TypeSelect>
          <Edge><Icon n="fifty" s={19} />Mosaico</Edge>
          <Edge><Icon n="trellisCols" s={19} />Colunas com Treliças</Edge>
          <Edge><Icon n="trellisRows" s={19} />Linhas com Grade</Edge>
          <Box icon="values" label="Valores (Eixo Y)" field="QUANTIDADE" kind="hash" w={160} mt={4.500} />
          <Box icon="category" label="Categoria (Eixo X)" field="ESTADO" kind="attr" w={121} mt={8} mb={3.500} />
          <Edge><Icon n="palette" s={19} />Cor</Edge>
          <Edge><Icon n="size" s={19} />Tamanho (Largura)</Edge>
          <Edge><Icon n="tip" s={19} />Dica de Ferramenta</Edge>
          <Edge><Icon n="details" s={19} />Detalhes</Edge>
          <Box icon="funnel" label="Filtros" field="QUANTIDADE" kind="hash" w={160} mt={4.500} mb={3} />
          <Edge><Icon n="related" s={19} />Colunas Relacionadas</Edge>
        </GrammarPanel>

        <Main>
          <FilterBar>
            <Chip $w={123} $mr={8}>ESTADO</Chip><Chip $w={170} $mr={6}>EMBARCACAO</Chip><Icon n="plus" s={19} />
            <BarRight>
              <Icon n="filterGear" /><Rule $h={37} $m="0 26px 6px 11px" /><Icon n="traffic" s={21} />
              <Rule $h={0} $m="0 5.5px" /><Icon n="dots" />
            </BarRight>
          </FilterBar>
          <CanvasWrap>
            <Canvas>
              <TopRow>
                <Banner>Embarcações Brasileiras</Banner>
                <YearFilter><div>ANO</div><YearSelect>2023<Caret $c="#161513" /></YearSelect></YearFilter>
              </TopRow>
              <MapViz>
                <VizTitle $pl={13}>LATITUDE, LONGITUDE, ESTADO, QUANTIDADE</VizTitle>
                <MapRow>
                  <MapFrame><BrazilMap /></MapFrame>
                  <Legend>
                    <LegendHead>LATITUDE, ...</LegendHead>
                    <LegendTitle $lh={33}>ESTADO</LegendTitle>
                    <LegendItems>
                      {states.map((s, i) => <LegendItem key={s} $c={palette[i % 12]}>{s}</LegendItem>)}
                    </LegendItems>
                    <LegendTitle $lh={29}>QUANTIDADE</LegendTitle>
                  </Legend>
                </MapRow>
              </MapViz>
              <RightCol>
                <ChartCard>
                  <CardHead>
                    <Badge /><VizTitle>QUANTIDADE por ESTADO</VizTitle>
                    <CardTools>{['traffic', 'sort', 'target', 'chartPie', 'copy', 'expand', 'dots'].map(n => <Icon key={n} n={n} />)}</CardTools>
                  </CardHead>
                  <Subtitle>Mais Alto 10 QUANTIDADE</Subtitle>
                  <BarChart />
                </ChartCard>
                <CloudCard>
                  <CardHead><Badge /><VizTitle>QUANTIDADE por EMBARCACAO</VizTitle></CardHead>
                  <WordCloud />
                </CloudCard>
              </RightCol>
            </Canvas>
            <Scroll><Up $c="#bab4b0" $w={5} /><Thumb /><Caret $c="#bab4b0" $w={5} /></Scroll>
          </CanvasWrap>
          <Footer>
            <PageTab $w={66} $pl={13} $on>Geral</PageTab>
            <PageTab $w={144} $pl={29}>Ano a Ano</PageTab>
            <PageTab $w={114} $pl={0}>Autoinsights</PageTab>
            <FooterPlus><Icon n="plus" /></FooterPlus>
            <FooterRight>
              <span>10 Barras</span>
              <Rule $h={23} $m="0 14px 0 15px" />
              <Icon n="devices" /><Tool $ml={10}><Icon n="borders" c="#b3afac" /></Tool>
              <Tool $ml={6}><Caret $c="#a8a4a1" $w={5.500} /></Tool>
              <Tool $ml={13}><Icon n="brush" c="#609a2c" /></Tool>
              <Tool $ml={12}><Icon n="bolt" c="#609a2c" /></Tool>
              <Rule $h={23} $m="0 0 0 14px" />
              <LayoutBtn $ml={14} $c="#609a2c" $b="3px 3px 3px 8px" />
              <LayoutBtn $ml={12} $c="#609a2c" $b="3px"><i /></LayoutBtn>
              <LayoutBtn $ml={12} $c="#33302d" $b="3px 8px 3px 3px" />
            </FooterRight>
          </Footer>
        </Main>
      </Body>
      <BottomEdge />

      <Mark $x={5} $y={48} $w={47} $h={59} $c="#ff0000" />
      <Mark $x={0} $y={147} $w={281} $h={649} $c="#ff0000" />
      <Mark $x={291} $y={53} $w={285} $h={744} $c="#008500" />
      <Mark $x={487} $y={53} $w={50} $h={54} $c="#008500" />
      <Mark $x={301} $y={101} $w={98} $h={54} $c="#008500" />
      <Mark $x={536} $y={58} $w={32} $h={33} $c="#0080c6" />
      <Arrow width="480" height="40" viewBox="560 50 480 40">
        <path d="M564 62.500L1005 64.700" stroke="#0080c6" strokeWidth="3.600" />
        <path d="M1003 58.500L1023.500 65 1003 71z" fill="#0080c6" />
      </Arrow>
      <Note $x={31} $y={820} $c="#ff0000">DADOS</Note>
      <Note $x={289} $y={816} $c="#008500" $ls={0.550}>Gramática do Painel</Note>
      <Note $x={1027} $y={58} $c="#0080c6" $ls={0.550}>Propriedades do Gráfico</Note>
    </Page>
  );
}
